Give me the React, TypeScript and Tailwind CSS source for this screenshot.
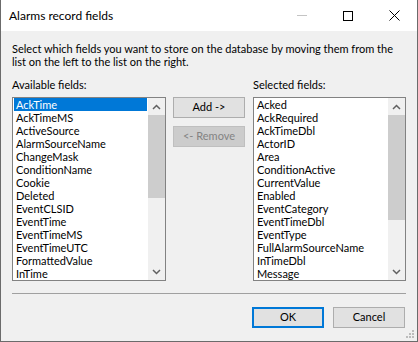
import React from "react";

const availableFields = [
  "AckTime",
  "AckTimeMS",
  "ActiveSource",
  "AlarmSourceName",
  "ChangeMask",
  "ConditionName",
  "Cookie",
  "Deleted",
  "EventCLSID",
  "EventTime",
  "EventTimeMS",
  "EventTimeUTC",
  "FormattedValue",
  "InTime",
];

const selectedFields = [
  "Acked",
  "AckRequired",
  "AckTimeDbl",
  "ActorID",
  "Area",
  "ConditionActive",
  "CurrentValue",
  "Enabled",
  "EventCategory",
  "EventTimeDbl",
  "EventType",
  "FullAlarmSourceName",
  "InTimeDbl",
  "Message",
];

const Chevron = ({ up }: { up?: boolean }) => (
  <svg width="9" height="6" viewBox="0 0 9 6">
    <path
      d={up ? "M1 5 L4.5 1.5 L8 5" : "M1 1 L4.5 4.5 L8 1"}
      fill="none"
      stroke="#606060"
      strokeWidth="1.5"
    />
  </svg>
);

const ListBox = ({
  items,
  selected,
  thumbHeight,
  width,
}: {
  items: string[];
  selected?: number;
  thumbHeight: string;
  width: string;
}) => (
  <div className={`flex h-[184px] ${width} border border-[#828282] bg-white`}>
    <div className="flex-1 flex flex-col overflow-hidden">
      {items.map((item, i) => (
        <div
          key={item}
          className={`h-[13px] leading-[13px] whitespace-nowrap ${
            i === selected ? "bg-[#0078d7] text-white ml-[1px] mr-[1px] pl-[2px]" : "pl-[3px]"
          }`}
        >
          {item}
        </div>
      ))}
    </div>
    <div className="w-[17px] flex flex-col bg-[#f0f0f0]">
      <div className="h-[17px] flex items-center justify-center">
        <Chevron up />
      </div>
      <div className={`${thumbHeight} bg-[#cdcdcd]`} />
      <div className="flex-1" />
      <div className="h-[17px] flex items-center justify-center">
        <Chevron />
      </div>
    </div>
  </div>
);

const App = () => {
  return (
    <div
      className="relative w-[418px] h-[342px] flex flex-col bg-[#f0f0f0] border-x border-b border-[#6b6b6b] text-[11px] text-black overflow-hidden"
      style={{ fontFamily: "Lato, 'Liberation Sans', sans-serif" }}
    >
      {/* title bar */}
      <div className="h-[31px] flex items-center bg-white shrink-0">
        <span className="pl-[8px] text-[12px]">Alarms record fields</span>
        <div className="ml-auto flex h-full">
          <div className="w-[46px] flex items-center justify-center">
            <div className="w-[10px] h-px bg-[#c4c4c4]" />
          </div>
          <div className="w-[46px] flex items-center justify-center">
            <div className="w-[10px] h-[10px] border border-black" />
          </div>
          <div className="w-[46px] flex items-center justify-center">
            <svg width="11" height="11" viewBox="0 0 11 11">
              <path d="M0.5 0.5 L10.5 10.5 M10.5 0.5 L0.5 10.5" stroke="#000" strokeWidth="1" />
            </svg>
          </div>
        </div>
      </div>

      <div className="flex flex-col px-[11px]">
        <p className="mt-[11px] leading-[13px] text-[11px] whitespace-nowrap">
          Select which fields you want to store on the database by moving them from the
          <br />
          list on the left to the list on the right.
        </p>

        <div className="flex mt-[10px]">
          <div className="flex flex-col">
            <div className="h-[13px] leading-[13px] mb-[6px]">Available fields:</div>
            <ListBox items={availableFields} selected={0} thumbHeight="h-[83px]" width="w-[154px]" />
          </div>
          <div className="flex flex-col ml-[7px] w-[72px] pt-[19px] gap-[8px]">
            <button className="h-[21px] bg-[#e1e1e1] border border-[#adadad]">Add -&gt;</button>
            <button className="h-[21px] bg-[#cccccc] border border-[#bfbfbf] text-[#838383]">
              &lt;- Remove
            </button>
          </div>
          <div className="flex flex-col ml-[8px]">
            <div className="h-[13px] leading-[13px] mb-[6px]">Selected fields:</div>
            <ListBox items={selectedFields} thumbHeight="h-[105px]" width="w-[153px]" />
          </div>
        </div>

        <div className="mt-[12px] h-px bg-[#a0a0a0]" />

        <div className="flex justify-end gap-[9px] mt-[13px] pr-[1px]">
          <button className="w-[72px] h-[21px] bg-[#e1e1e1] border-2 border-[#0078d7]">OK</button>
          <button className="w-[72px] h-[21px] bg-[#e1e1e1] border border-[#adadad]">Cancel</button>
        </div>
      </div>

      {/* size grip */}
      <svg className="absolute right-[3px] bottom-[3px]" width="8" height="8" viewBox="0 0 8 8">
        <rect x="6" y="0" width="2" height="2" fill="#bcbcbc" />
        <rect x="3" y="3" width="2" height="2" fill="#bcbcbc" />
        <rect x="6" y="3" width="2" height="2" fill="#bcbcbc" />
        <rect x="0" y="6" width="2" height="2" fill="#bcbcbc" />
        <rect x="3" y="6" width="2" height="2" fill="#bcbcbc" />
        <rect x="6" y="6" width="2" height="2" fill="#bcbcbc" />
      </svg>
    </div>
  );
};

export default App;
